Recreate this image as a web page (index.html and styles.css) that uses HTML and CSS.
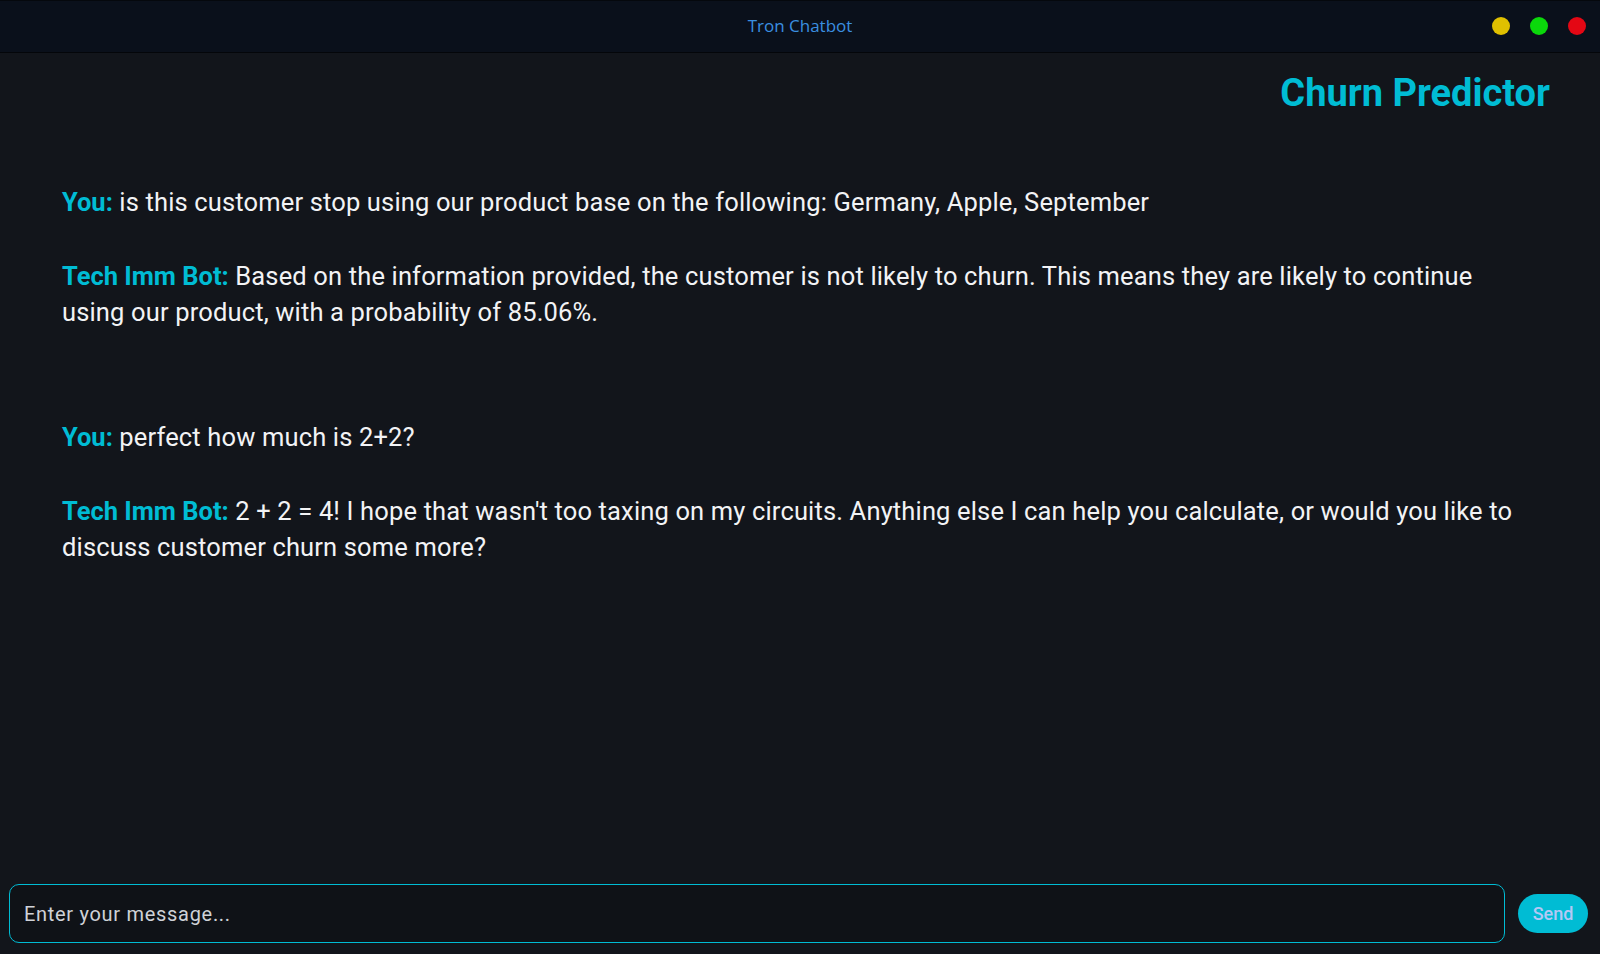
FILE: index.html
```html
<!DOCTYPE html>
<html>
<head>
<meta charset="utf-8">
<title>Tron Chatbot</title>
<link rel="stylesheet" href="styles.css">
</head>
<body>
<div class="app">
  <header class="titlebar">
    <div class="title">Tron Chatbot</div>
    <div class="dots">
      <span class="dot yellow"></span>
      <span class="dot green"></span>
      <span class="dot red"></span>
    </div>
  </header>
  <main class="main">
    <h1 class="heading">Churn Predictor</h1>
    <div class="chat">
      <p class="msg user"><span class="who">You:</span> is this customer stop using our product base on the following: Germany, Apple, September</p>
      <p class="msg bot"><span class="who">Tech Imm Bot:</span> Based on the information provided, the customer is not likely to churn. This means they are likely to continue using our product, with a probability of 85.06%.</p>
      <p class="msg user"><span class="who">You:</span> perfect how much is 2+2?</p>
      <p class="msg bot"><span class="who">Tech Imm Bot:</span> 2 + 2 = 4! I hope that wasn't too taxing on my circuits. Anything else I can help you calculate, or would you like to discuss customer churn some more?</p>
    </div>
  </main>
  <footer class="composer">
    <input class="input" type="text" placeholder="Enter your message...">
    <button class="send">Send</button>
  </footer>
</div>
</body>
</html>
```

FILE: styles.css
```css
* { box-sizing: border-box; }
html, body { margin: 0; padding: 0; height: 100%; }
body {
  background: #12151b;
  font-family: Roboto, "Liberation Sans", sans-serif;
  color: #f2f3f5;
}
.app {
  height: 954px;
  display: flex;
  flex-direction: column;
}
.titlebar {
  height: 53px;
  flex: none;
  background: #0a101b;
  border-top: 1px solid #05080d;
  border-bottom: 1px solid #04060a;
  display: flex;
  align-items: center;
  justify-content: center;
  position: relative;
}
.title {
  font-family: "Open Sans", "Noto Sans", sans-serif;
  font-size: 17px;
  color: #3a8fe0;
  margin-top: -3px;
}
.dots {
  position: absolute;
  right: 14px;
  top: 16px;
  display: flex;
  gap: 20px;
}
.dot {
  width: 18px;
  height: 18px;
  border-radius: 50%;
  display: block;
}
.yellow { background: #e0c000; }
.green { background: #0bd80b; }
.red { background: #e40714; }
.main {
  flex: 1;
  padding: 0 50px 0 62px;
  display: flex;
  flex-direction: column;
}
.heading {
  margin: 18px 0 0 0;
  align-self: flex-end;
  font-size: 38px;
  font-weight: 700;
  color: #00bcd4;
  line-height: 44px;
}
.chat {
  margin-top: 69px;
  padding-right: 24px;
}
.msg {
  margin: 0;
  font-size: 25.5px;
  line-height: 36px;
  letter-spacing: 0.15px;
  color: #f2f3f5;
}
.msg.user { margin-bottom: 38px; }
.msg.bot { margin-bottom: 89px; }
.who {
  color: #00bcd4;
  font-weight: 700;
  letter-spacing: 0;
}
.composer {
  flex: none;
  display: flex;
  align-items: center;
  gap: 13px;
  padding: 0 12px 11px 9px;
}
.input {
  flex: 1;
  height: 59px;
  background: #0f1217;
  border: 1.5px solid #00bcd4;
  border-radius: 10px;
  padding: 0 14px;
  font-family: Roboto, "Liberation Sans", sans-serif;
  font-size: 20px;
  letter-spacing: 0.7px;
  color: #e8eaee;
  outline: none;
}
.input::placeholder { color: #cfd2d8; }
.send {
  flex: none;
  width: 70px;
  height: 39px;
  border: none;
  border-radius: 20px;
  background: #00bcd4;
  color: #b4c8f5;
  font-family: Roboto, "Liberation Sans", sans-serif;
  font-size: 18px;
  font-weight: 500;
  padding: 0;
}
```
